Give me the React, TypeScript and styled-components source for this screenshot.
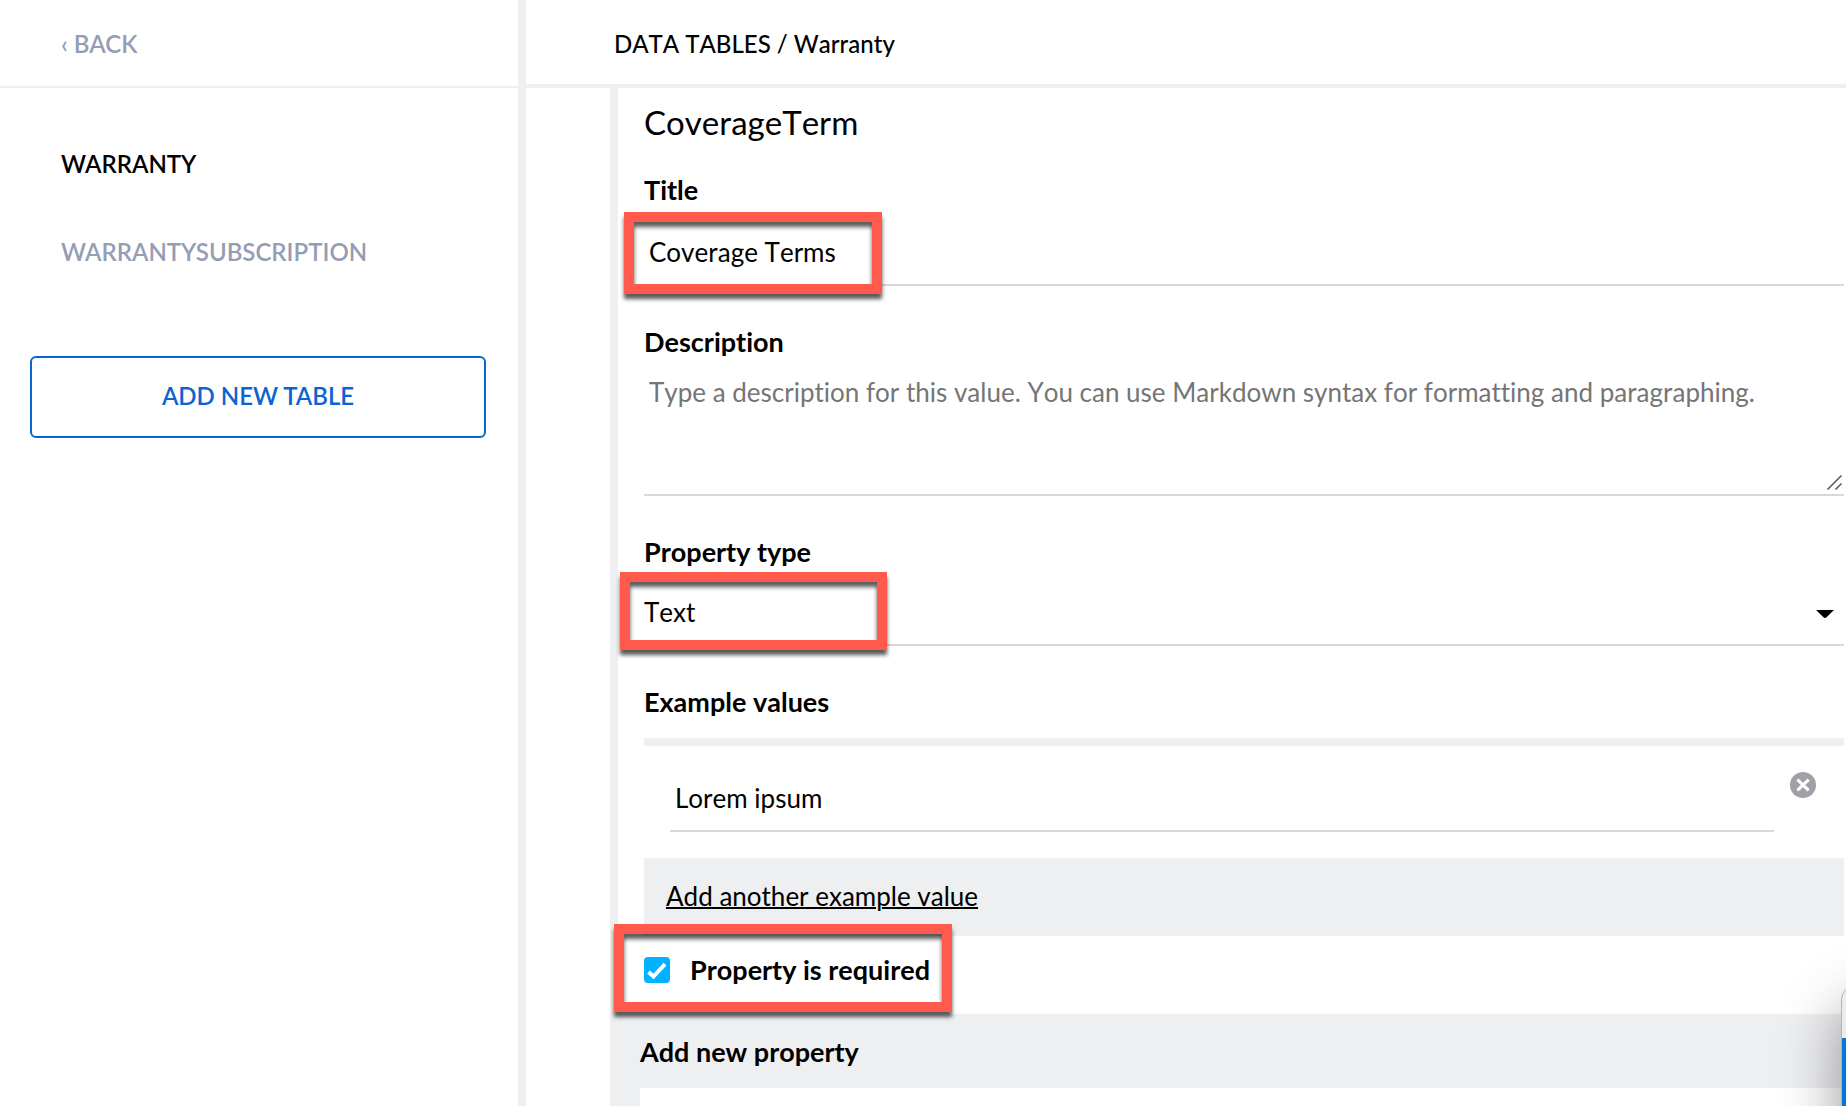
import { useState } from 'react';
import styled, { createGlobalStyle } from 'styled-components';

const GlobalStyle = createGlobalStyle`
  *, *::before, *::after { box-sizing: border-box; }
  body {
    margin: 0;
    background: #fff;
    color: #000;
    overflow: hidden;
    font-family: Lato, "Liberation Sans", sans-serif;
    font-size: 26px;
    line-height: 32px;
    font-variant-ligatures: none;
  }
  input, textarea, select, button { font: inherit; font-variant-ligatures: none; color: inherit; }
`;

const Page = styled.div`
  position: relative;
  display: flex;
  height: 100vh;
  overflow: hidden;
`;

const Sidebar = styled.aside`
  flex: none;
  width: 526px;
  border-right: 8px solid #eeeff1;
`;

const SidebarHeader = styled.div`
  height: 88px;
  padding: 28px 61px 0;
  border-bottom: 2px solid #eeeff1;
`;

const NavLink = styled.a<{ $active?: boolean }>`
  display: block;
  font-size: 24px;
  font-weight: 600;
  text-decoration: none;
  color: ${(p) => (p.$active ? '#000' : '#949db5')};
`;

const TableNav = styled.nav`
  display: flex;
  flex-direction: column;
  gap: 56px;
  padding: 60px 61px 88px;
`;

const AddTableButton = styled.button`
  display: block;
  width: 456px;
  margin-left: 30px;
  padding: 22px 0 24px;
  border: 2px solid #0c64d0;
  border-radius: 6px;
  background: #fff;
  color: #0c64d0;
  font-size: 24px;
  font-weight: 600;
`;

const Main = styled.main`
  display: flex;
  flex: 1;
  flex-direction: column;
  min-width: 0;
  font-kerning: none;
`;

const MainHeader = styled.header`
  flex: none;
  height: 88px;
  padding: 28px 88px 0;
  border-bottom: 4px solid #eeeff1;
  font-size: 24px;
  font-weight: 500;
`;

const Panel = styled.section`
  display: flex;
  flex: 1;
  flex-direction: column;
  margin-left: 84px;
  border-left: 8px solid #eeeff1;
`;

const PropertyForm = styled.form`
  padding: 14px 2px 0 26px;
  input, textarea, select { font-kerning: none; }
`;

const PropertyName = styled.h2`
  margin: 0 0 32px;
  font-size: 33px;
  font-weight: 400;
  line-height: 40px;
`;

const Field = styled.div`
  position: relative;
  margin-bottom: 40px;
`;

const Label = styled.label`
  display: block;
  font-size: 27px;
  font-weight: 700;
`;

const TextInput = styled.input`
  display: block;
  width: 100%;
  height: 80px;
  padding: 30px 5px 16px;
  border: 0;
  border-bottom: 2px solid #d8d8de;
  background: transparent;
  outline: none;
`;

const TextArea = styled.textarea`
  display: block;
  width: 100%;
  height: 138px;
  padding: 18px 5px;
  border: 0;
  border-bottom: 2px solid #d8d8de;
  outline: none;
  resize: none;
  &::placeholder { color: #757575; opacity: 1; }
`;

const ResizeGrip = styled.svg`
  position: absolute;
  right: 2px;
  bottom: 6px;
`;

const Select = styled.select`
  display: block;
  width: 100%;
  height: 78px;
  padding: 28px 0 16px;
  border: 0;
  border-bottom: 2px solid #d8d8de;
  border-radius: 0;
  background: transparent;
  appearance: none;
  outline: none;
`;

const SelectArrow = styled.svg`
  position: absolute;
  right: 10px;
  bottom: 28px;
  pointer-events: none;
`;

const SectionTitle = styled.h3`
  margin: 0 0 20px;
  font-size: 27px;
  font-weight: 700;
`;

const ExampleRow = styled.div`
  display: flex;
  align-items: flex-start;
  gap: 16px;
  padding: 26px 28px 26px 26px;
  border-top: 8px solid #eeeff1;
`;

const ExampleInput = styled(TextInput)`
  flex: 1;
  min-width: 0;
  height: 60px;
  padding-top: 10px;
`;

const RemoveButton = styled.button`
  display: block;
  padding: 0;
  border: 0;
  background: none;
  line-height: 0;
`;

const AddExample = styled.div`
  padding: 22px 22px 24px;
  background: #eeeff1;
`;

const ExampleLink = styled.a`
  color: #000;
  text-decoration: underline;
  text-decoration-thickness: 2px;
`;

const RequiredRow = styled.div`
  position: relative;
  display: flex;
  align-items: center;
  gap: 20px;
  padding: 18px 0 28px;
`;

const Checkbox = styled.input`
  width: 26px;
  height: 26px;
  margin: 0;
  border-radius: 4px;
  appearance: none;
  background: #fff;
  border: 2px solid #a0a1a8;
  &:checked { border: 0; background: #00b2ff; }
`;

const CheckMark = styled.svg`
  position: absolute;
  left: 0;
  top: 21px;
  pointer-events: none;
`;

const Highlight = styled.div<{ $left: number; $top: number; $width: number; $height: number }>`
  position: absolute;
  left: ${(p) => p.$left}px;
  top: ${(p) => p.$top}px;
  width: ${(p) => p.$width}px;
  height: ${(p) => p.$height}px;
  border: 10px solid #ff5a4c;
  box-shadow: 0 5px 4px rgba(0, 0, 0, 0.65), inset 0 5px 4px rgba(0, 0, 0, 0.65);
  pointer-events: none;
`;

const NewProperty = styled.section`
  display: flex;
  flex: 1;
  flex-direction: column;
  padding: 22px 0 0 22px;
  background: #eeeff1;
`;

const NewPropertyBody = styled.div`
  flex: 1;
  background: #fff;
`;

const FloatingWindow = styled.div`
  position: absolute;
  right: -95px;
  bottom: -200px;
  width: 100px;
  height: 322px;
  padding-top: 53px;
  border: 1px solid #b5b5b5;
  border-radius: 16px;
  background: #ebedec;
  box-shadow: 0 24px 60px rgba(0, 0, 0, 0.4);
  overflow: hidden;
`;

const WindowBody = styled.div`
  height: 100%;
  background: #0577d8;
`;

export default function App() {
  const [title, setTitle] = useState('Coverage Terms');
  const [example, setExample] = useState('Lorem ipsum');
  const [required, setRequired] = useState(true);

  return (
    <>
      <GlobalStyle />
      <Page>
        <Sidebar>
          <SidebarHeader>
            <NavLink href="#back">‹ BACK</NavLink>
          </SidebarHeader>
          <TableNav>
            <NavLink href="#warranty" $active>WARRANTY</NavLink>
            <NavLink href="#subscription">WARRANTYSUBSCRIPTION</NavLink>
          </TableNav>
          <AddTableButton type="button">ADD NEW TABLE</AddTableButton>
        </Sidebar>

        <Main>
          <MainHeader>DATA TABLES / Warranty</MainHeader>
          <Panel>
            <PropertyForm>
              <PropertyName>CoverageTerm</PropertyName>

              <Field>
                <Label htmlFor="title">Title</Label>
                <TextInput id="title" value={title} onChange={(e) => setTitle(e.target.value)} />
                <Highlight $left={-20} $top={38} $width={258} $height={82} />
              </Field>

              <Field>
                <Label htmlFor="description">Description</Label>
                <TextArea
                  id="description"
                  placeholder="Type a description for this value. You can use Markdown syntax for formatting and paragraphing."
                />
                <ResizeGrip width="15" height="15" viewBox="0 0 15 15" stroke="#555" strokeWidth="1.5" aria-hidden="true">
                  <path d="M0.5 14.5L14.5 0.5M8.5 14.5L14.5 8.5" />
                </ResizeGrip>
              </Field>

              <Field>
                <Label htmlFor="type">Property type</Label>
                <Select id="type" defaultValue="Text">
                  <option>Text</option>
                </Select>
                <SelectArrow width="18" height="8" viewBox="0 0 18 8" aria-hidden="true">
                  <path d="M0 0H18L10.5 7.2Q9 8.6 7.5 7.2Z" />
                </SelectArrow>
                <Highlight $left={-24} $top={36} $width={267} $height={78} />
              </Field>

              <SectionTitle>Example values</SectionTitle>
              <ExampleRow>
                <ExampleInput aria-label="Example value" value={example} onChange={(e) => setExample(e.target.value)} />
                <RemoveButton type="button" aria-label="Remove example value">
                  <svg width="26" height="26" viewBox="0 0 26 26" aria-hidden="true">
                    <circle cx="13" cy="13" r="13" fill="#a0a1a8" />
                    <path d="M7.4 7.6L18.6 18.4M18.6 7.6L7.4 18.4" stroke="#fff" strokeWidth="3" />
                  </svg>
                </RemoveButton>
              </ExampleRow>
              <AddExample>
                <ExampleLink href="#add-example">Add another example value</ExampleLink>
              </AddExample>

              <RequiredRow>
                <Checkbox
                  id="required"
                  type="checkbox"
                  checked={required}
                  onChange={(e) => setRequired(e.target.checked)}
                />
                {required && (
                  <CheckMark width="26" height="26" viewBox="0 0 26 26" fill="none" aria-hidden="true">
                    <path d="M4.5 15L9.5 19.5L21 7.2" stroke="#fff" strokeWidth="4" />
                  </CheckMark>
                )}
                <Label htmlFor="required">Property is required</Label>
                <Highlight $left={-30} $top={-12} $width={338} $height={88} />
              </RequiredRow>
            </PropertyForm>

            <NewProperty>
              <SectionTitle>Add new property</SectionTitle>
              <NewPropertyBody />
            </NewProperty>
          </Panel>
        </Main>

        <FloatingWindow aria-hidden="true">
          <WindowBody />
        </FloatingWindow>
      </Page>
    </>
  );
}
